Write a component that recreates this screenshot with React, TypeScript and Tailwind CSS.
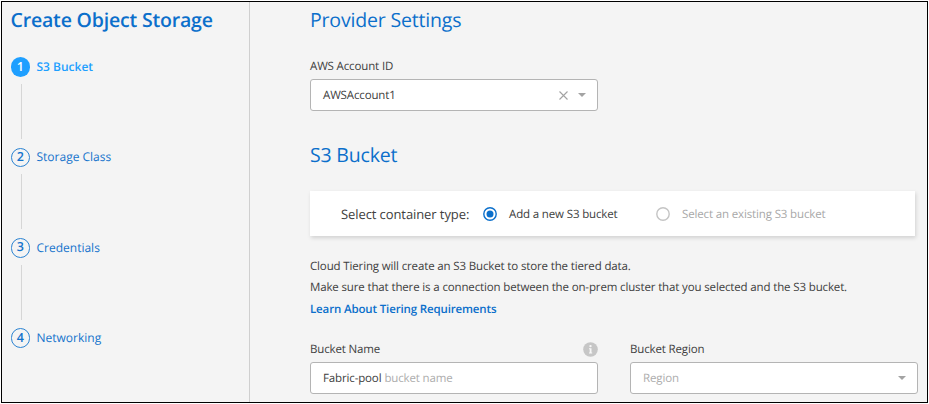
import React from "react";

const steps = ["S3 Bucket", "Storage Class", "Credentials", "Networking"];

function Caret() {
  return (
    <svg width="8" height="4" viewBox="0 0 8 4" className="shrink-0">
      <path d="M0 0h8L4 4z" fill="#a3a3a3" />
    </svg>
  );
}

function Radio({ checked = false }: { checked?: boolean }) {
  return (
    <svg width="14" height="14" viewBox="0 0 14 14" className="shrink-0">
      <circle cx="7" cy="7" r="6.2" fill="none" stroke={checked ? "#0b6fcb" : "#c4c4c4"} strokeWidth="1.4" />
      {checked && <circle cx="7" cy="7" r="3.5" fill="#0b6fcb" />}
    </svg>
  );
}

function Step({ index, label }: { index: number; label: string }) {
  const active = index === 0;
  return (
    <li className="flex h-[90.4px] flex-col">
      <div className="flex h-5 items-center">
        <span
          className={
            active
              ? "flex size-[19.5px] items-center justify-center rounded-full bg-[#1e9fff] text-[12.5px] font-semibold text-white"
              : "flex size-[19.5px] items-center justify-center rounded-full border border-[#2b83d2] text-[12.5px] font-semibold text-[#1473cc]"
          }
        >
          {index + 1}
        </span>
        <span
          className={
            active
              ? "ml-[6.5px] text-[12px] font-semibold text-[#1e9fff]"
              : "ml-[6.5px] text-[12px] text-[#1473cc]"
          }
        >
          {label}
        </span>
      </div>
      {index < steps.length - 1 && (
        <div className="mt-[7px] ml-2.5 h-[55px] w-[1.5px] bg-[#d6d6d6]" />
      )}
    </li>
  );
}

export default function App() {
  return (
    <div className="h-[404px] w-[929px] overflow-hidden bg-white p-px font-['Open_Sans',sans-serif] text-[#404040] [text-rendering:geometricPrecision]">
      <div className="flex h-[402px] w-[927px] border border-black bg-[#f4f4f4]">
        <aside className="w-[248px] shrink-0 border-r border-[#cfcfcf] pl-[8.5px]">
          <h1 className="mt-[5px] text-[19.5px] leading-[26px] font-semibold tracking-[-0.18px] whitespace-nowrap text-[#0b6fcb]">
            Create Object Storage
          </h1>
          <ol className="mt-[24px]">
            {steps.map((label, i) => (
              <Step key={label} index={i} label={label} />
            ))}
          </ol>
        </aside>

        <main className="min-w-0 flex-1 pl-[60px] text-[11.5px] leading-4 tracking-[-0.14px] whitespace-nowrap">
          <h2 className="mt-[5px] text-[19.5px] leading-[26px] tracking-[-0.18px] text-[#0b6fcb]">Provider Settings</h2>
          <div className="mt-[26px]">AWS Account ID</div>
          <div className="mt-1 flex h-8 w-[288px] items-center rounded-[3px] border border-[#b4b4b4] bg-white pr-[11px] pl-3">
            <span className="flex-1 pt-0.5">AWSAccount1</span>
            <svg width="9" height="9" viewBox="0 0 9 9" className="mr-2.5">
              <path d="M.5.5l8 8M8.5.5l-8 8" stroke="#a3a3a3" strokeWidth="1.1" fill="none" />
            </svg>
            <Caret />
          </div>

          <h2 className="mt-[31px] text-[19.5px] leading-[26px] tracking-[-0.18px] text-[#0b6fcb]">S3 Bucket</h2>
          <div className="mt-[23px] flex h-[45px] w-[605px] items-center bg-white pl-[31px] shadow-[1px_2px_4px_rgba(0,0,0,0.14)]">
            <span className="w-[142px] text-[13px] tracking-[-0.09px]">Select container type:</span>
            <Radio checked />
            <span className="ml-3 w-[147px] pt-0.5">Add a new S3 bucket</span>
            <Radio />
            <span className="ml-3 pt-0.5 text-[#a8a8a8]">Select an existing S3 bucket</span>
          </div>

          <p className="mt-[20px] leading-[21px]">
            Cloud Tiering will create an S3 Bucket to store the tiered data.
            <br />
            Make sure that there is a connection between the on-prem cluster that you selected and the S3 bucket.
          </p>
          <a className="mt-[3px] block leading-[18px] font-semibold text-[#0b6fcb]">
            Learn About Tiering Requirements
          </a>

          <div className="mt-[22px] flex gap-8">
            <div className="w-[288px]">
              <div className="flex h-4 items-center justify-between">
                <span className="pt-0.5">Bucket Name</span>
                <svg width="15" height="15" viewBox="0 0 15 15">
                  <circle cx="7.5" cy="7.5" r="7.3" fill="#c6c6c6" />
                  <circle cx="7.5" cy="4.1" r="1.2" fill="#f7f7f7" />
                  <path d="M6 6.2h2.5v4.3h.7v1H6v-1h.7V7.2H6z" fill="#f7f7f7" />
                </svg>
              </div>
              <div className="mt-[5px] flex h-8 items-center rounded-[3px] border border-[#b4b4b4] bg-white pl-3">
                <span className="pt-0.5">Fabric-pool</span>
                <span className="ml-[3px] pt-0.5 text-[#adadad]">bucket name</span>
              </div>
            </div>
            <div className="w-[288px]">
              <div className="flex h-4 items-center">
                <span className="pt-0.5">Bucket Region</span>
              </div>
              <div className="mt-[5px] flex h-8 items-center justify-between rounded-[3px] border border-[#b4b4b4] bg-white pr-[11px] pl-3">
                <span className="pt-0.5 text-[#adadad]">Region</span>
                <Caret />
              </div>
            </div>
          </div>
        </main>
      </div>
    </div>
  );
}
